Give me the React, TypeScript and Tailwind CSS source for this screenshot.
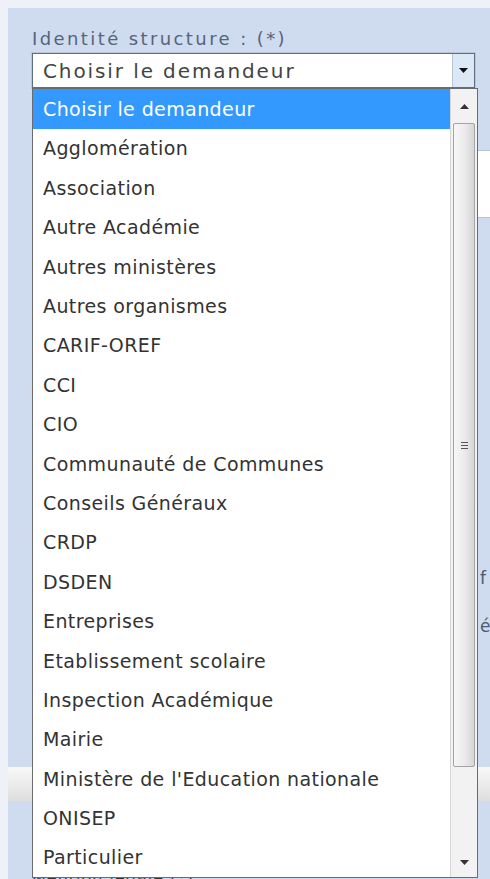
import React from 'react';

const demandeurs = [
  'Agglomération',
  'Association',
  'Autre Académie',
  'Autres ministères',
  'Autres organismes',
  'CARIF-OREF',
  'CCI',
  'CIO',
  'Communauté de Communes',
  'Conseils Généraux',
  'CRDP',
  'DSDEN',
  'Entreprises',
  'Etablissement scolaire',
  'Inspection Académique',
  'Mairie',
  "Ministère de l'Education nationale",
  'ONISEP',
  'Particulier',
];

const DemandeurSelect = () => {
  return (
    <div className="relative">
      <div className="flex h-[35px] w-[443px] items-stretch border border-[#5f6f80] bg-white shadow-[0_0_0_1px_#b9c7d8]">
        <div className="flex flex-1 items-center pl-[10px] text-[20px] tracking-[1.9px] text-[#444]">
          Choisir le demandeur
        </div>
        <div className="flex w-[22px] items-center justify-center border-l border-[#b7c4d3] bg-[#dce8f5]">
          <svg width="9" height="5" viewBox="0 0 9 5">
            <path d="M0 0h9L4.5 5z" fill="#111" />
          </svg>
        </div>
      </div>

      {/* open option list, drawn over the rest of the form */}
      <div className="absolute left-0 top-[35px] z-10 flex w-[446px] border border-[#6b6b6b] bg-white text-[19px] tracking-[0.4px] text-[#333]">
        <ul className="flex-1">
          <li className="flex h-[40px] items-center bg-[#3399ff] pl-[10px] text-white">Choisir le demandeur</li>
          {demandeurs.map((d) => (
            <li key={d} className="flex h-[39.4px] items-center pl-[10px]">
              {d}
            </li>
          ))}
        </ul>
        <div className="flex w-[27px] flex-col border-l border-[#d6d6d6] bg-[#f2f2f2]">
          <div className="flex h-[34px] items-center justify-center">
            <svg width="9" height="5" viewBox="0 0 9 5">
              <path d="M4.5 0L9 5H0z" fill="#333" />
            </svg>
          </div>
          <div className="mx-[2px] flex h-[644px] items-center justify-center rounded-[2px] border border-[#a4a4a4] bg-gradient-to-r from-[#f6f6f6] via-[#ececec] to-[#d6d6d6]">
            <div className="flex flex-col gap-[2px]">
              <div className="h-px w-[7px] bg-[#555]" />
              <div className="h-px w-[7px] bg-[#555]" />
              <div className="h-px w-[7px] bg-[#555]" />
            </div>
          </div>
          <div className="flex flex-1 items-end justify-center pb-[12px]">
            <svg width="9" height="5" viewBox="0 0 9 5">
              <path d="M0 0h9L4.5 5z" fill="#333" />
            </svg>
          </div>
        </div>
      </div>
    </div>
  );
};

const App = () => {
  return (
    <div className="h-[879px] overflow-hidden bg-[#eef2f8] pl-[8px] pt-[8px] font-['DejaVu_Sans',sans-serif]">
      <div className="h-full overflow-hidden bg-[#cfdcef] pl-[24px] pt-[21px]">
        <p className="mb-[4px] text-[18px] leading-[20px] tracking-[2.4px] text-[#55657a]">Identité structure : (*)</p>
        <DemandeurSelect />

        {/* form fields underneath the open list */}
        <div className="mt-[62px] h-[68px] w-[500px] border border-[#b5c4d6] bg-white" />
        <div className="mt-[348px] flex flex-col gap-[22px] pl-[448px] text-[17px] text-[#4a5a70]">
          <span>f</span>
          <span>é</span>
        </div>
        <div className="-ml-[40px] mt-[128px] h-[34px] w-[540px] bg-gradient-to-b from-[#f8f8f8] to-[#dedede]" />
        <p className="mt-[65px] text-[16px] tracking-[1px] text-[#333]">Mention légale (*)</p>
      </div>
    </div>
  );
};

export default App;
